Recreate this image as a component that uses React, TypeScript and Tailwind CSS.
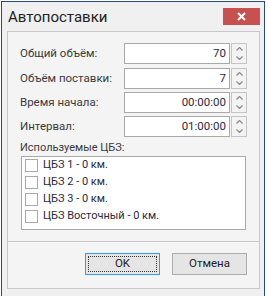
import React from 'react';

const font = { fontFamily: 'Roboto, "Noto Sans", sans-serif' };

function Spinner() {
  return (
    <div className="w-[16px] h-full border border-[#c4c4c4] bg-[#f3f3f3] flex flex-col items-center justify-center gap-[5px] ml-[1px]">
      <svg width="7" height="4" viewBox="0 0 7 4">
        <path d="M0.5 3.5 L3.5 0.5 L6.5 3.5" fill="none" stroke="#8a8a8a" strokeWidth="1.2" />
      </svg>
      <svg width="7" height="4" viewBox="0 0 7 4">
        <path d="M0.5 0.5 L3.5 3.5 L6.5 0.5" fill="none" stroke="#8a8a8a" strokeWidth="1.2" />
      </svg>
    </div>
  );
}

function FieldRow({ label, value, gap }: { label: string; value: string; gap: string }) {
  return (
    <div className={`flex items-center h-[21px] ${gap}`}>
      <div className="w-[104px] text-[11.5px] text-[#3a3a3a]">{label}</div>
      <div className="w-[106px] h-full border border-[#a9a9a9] bg-white flex items-center justify-end pr-[3px] text-[11.5px] text-[#2a2a40]">
        {value}
      </div>
      <Spinner />
    </div>
  );
}

export default function App() {
  const fields = [
    { label: 'Общий объём:', value: '70', gap: 'mt-0' },
    { label: 'Объём поставки:', value: '7', gap: 'mt-[4px]' },
    { label: 'Время начала:', value: '00:00:00', gap: 'mt-[3px]' },
    { label: 'Интервал:', value: '01:00:00', gap: 'mt-[3px]' },
  ];
  const depots = ['ЦБЗ 1 - 0 км.', 'ЦБЗ 2 - 0 км.', 'ЦБЗ 3 - 0 км.', 'ЦБЗ Восточный - 0 км.'];

  return (
    <div className="w-[268px] h-[296px] bg-white overflow-hidden pl-[1px] pt-[1px]" style={font}>
      <div className="w-[264px] h-[300px] border border-[#2b4a78] bg-[#f0f0f0] flex flex-col">
        {/* Title bar */}
        <div className="h-[29px] flex items-start justify-between pl-[6px] pr-[4px]">
          <div className="text-[15px] text-[#222] leading-none mt-[8px]">Автопоставки</div>
          <button className="w-[37px] h-[17px] bg-[#c75050] mt-[6px] flex items-center justify-center">
            <svg width="9" height="9" viewBox="0 0 9 9">
              <path d="M1 1 L8 8 M8 1 L1 8" stroke="#fff" strokeWidth="2" />
            </svg>
          </button>
        </div>

        {/* Panel */}
        <div className="ml-[5px] w-[253px] h-[258px] border border-[#c8c8c8] bg-[#f4f4f4] flex flex-col">
          <div className="px-[12px] pt-[11px] flex flex-col">
            {fields.map((f) => (
              <FieldRow key={f.label} label={f.label} value={f.value} gap={f.gap} />
            ))}
            <div className="text-[11px] text-[#3a3a3a] mt-[2px] h-[17px] leading-[17px]">Используемые ЦБЗ:</div>
            <div className="ml-[1px] w-[225px] h-[74px] border border-[#a9a9a9] bg-white pl-[3px]">
              {depots.map((d) => (
                <div key={d} className="flex items-center h-[17px] gap-[5px]">
                  <div className="w-[13px] h-[13px] border border-[#a9a9a9] bg-white" />
                  <span className="text-[11px] text-[#2a2a40]">{d}</span>
                </div>
              ))}
            </div>
          </div>
          <div className="mt-[11px] border-t border-[#c8c8c8]" />
          <div className="flex justify-end gap-[12px] pr-[12px] pt-[11px]">
            <button className="w-[75px] h-[22px] border border-[#3399ff] bg-[#e5e5e5] p-[2px]">
              <div className="w-full h-full border border-dotted border-[#333] flex items-center justify-center text-[11.5px] text-[#222]">
                OK
              </div>
            </button>
            <button className="w-[75px] h-[22px] border border-[#adadad] bg-[#e5e5e5] flex items-center justify-center text-[11.5px] text-[#222]">
              Отмена
            </button>
          </div>
        </div>
      </div>
    </div>
  );
}
